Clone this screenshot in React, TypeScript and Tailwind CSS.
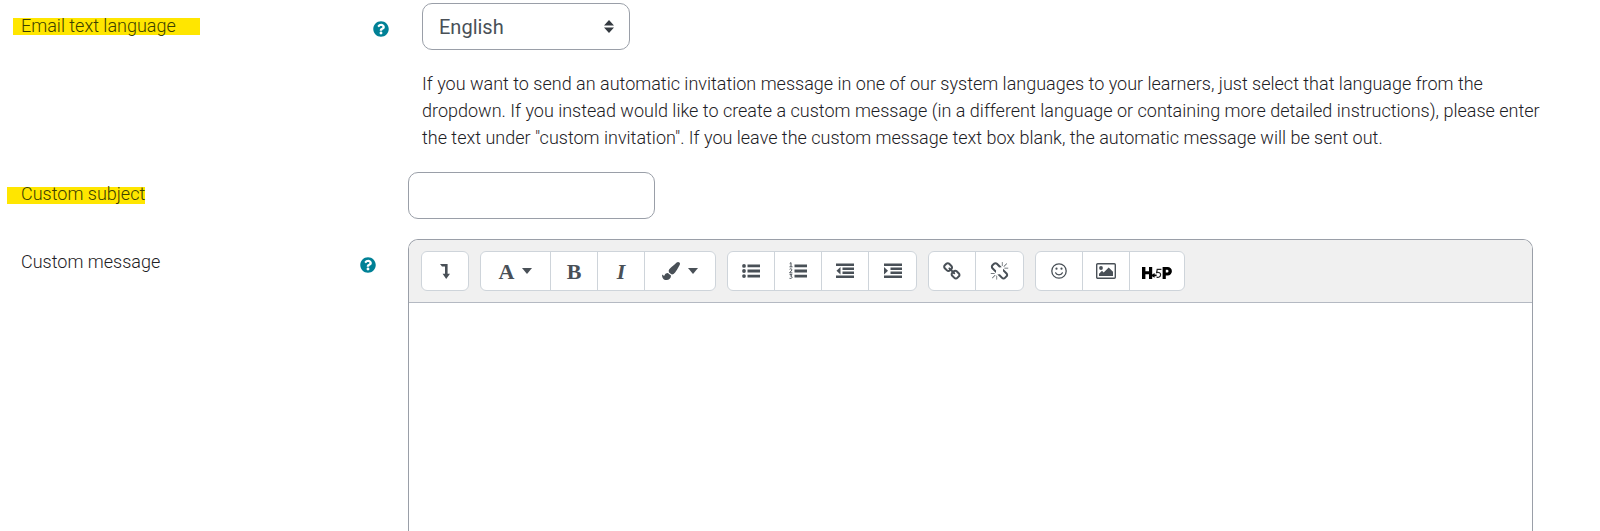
import type { ReactNode } from 'react';
import { FaPaintBrush, FaQuestionCircle } from 'react-icons/fa';

const chainPath =
  'M1456 1216q0-40-28-68l-208-208q-28-28-68-28-42 0-72 32 3 3 19 18.5t21.5 21.5 15 19 13 25.5 3.5 27.5q0 40-28 68t-68 28q-15 0-27.5-3.5t-25.5-13-19-15-21.5-21.5-18.5-19q-33 31-33 73 0 40 28 68l206 207q27 27 68 27 40 0 68-26l147-146q28-28 28-67zm-703-705q0-40-28-68l-206-207q-28-28-68-28-39 0-68 27l-147 146q-28 28-28 67 0 40 28 68l208 208q27 27 68 27 42 0 72-31-3-3-19-18.5t-21.5-21.5-15-19-13-25.5-3.5-27.5q0-40 28-68t68-28q15 0 27.5 3.5t25.5 13 19 15 21.5 21.5 18.5 19q33-31 33-73zm895 705q0 120-85 203l-147 146q-83 83-203 83-121 0-204-85l-206-207q-83-83-83-203 0-123 88-209l-88-88q-86 88-208 88-120 0-204-84l-208-208q-84-84-84-204t85-203l147-146q83-83 203-83 121 0 204 85l206 207q83 83 83 203 0 123-88 209l88 88q86-88 208-88 120 0 204 84l208 208q84 84 84 204z';

const brokenChainPath =
  'M503 1271l-256 256q-10 9-23 9-12 0-23-9-9-10-9-23t9-23l256-256q10-9 23-9t23 9q9 10 9 23t-9 23zm169 41v320q0 14-9 23t-23 9-23-9-9-23v-320q0-14 9-23t23-9 23 9 9 23zm-224-224q0 14-9 23t-23 9h-320q-14 0-23-9t-9-23 9-23 23-9h320q14 0 23 9t9 23zm1264 128q0 120-85 203l-147 146q-83 83-203 83-121 0-204-85l-334-335q-21-21-42-56l239-18 273 274q28 28 68 28.5t68-27.5l147-146q28-28 28-67 0-40-28-68l-274-275 18-239q35 21 56 42l336 336q84 86 84 204zm-617-724l-239 18-273-274q-28-28-68-28-39 0-68 27l-147 146q-28 28-28 67 0 40 28 68l274 274-18 240q-35-21-56-42l-336-336q-84-86-84-204 0-120 85-203l147-146q83-83 203-83 121 0 204 85l334 335q21 21 42 56zm633 84q0 14-9 23t-23 9h-320q-14 0-23-9t-9-23 9-23 23-9h320q14 0 23 9t9 23zm-544-544v320q0 14-9 23t-23 9-23-9-9-23v-320q0-14 9-23t23-9 23 9 9 23zm407 151l-256 256q-11 9-23 9t-23-9q-9-10-9-23t9-23l256-256q10-9 23-9t23 9q9 10 9 23t-9 23z';

function Help({ topic }: { topic: string }) {
  return (
    <button type="button" aria-label={`Help with ${topic}`} className="text-[#008196]">
      <FaQuestionCircle className="size-4" />
    </button>
  );
}

function Group({ children }: { children: ReactNode }) {
  return (
    <div className="flex items-center divide-x divide-[#ced4da] overflow-hidden rounded-md border border-[#ced4da] bg-white">
      {children}
    </div>
  );
}

const toolWidths = {
  single: 'w-[46px]',
  normal: 'w-[47px]',
  menu: 'w-[70px]',
};

function Tool({
  label,
  size = 'normal',
  children,
}: {
  label: string;
  size?: keyof typeof toolWidths;
  children: ReactNode;
}) {
  return (
    <button
      type="button"
      aria-label={label}
      className={`flex h-[38px] items-center justify-center gap-2 text-[#495057] ${toolWidths[size]}`}
    >
      {children}
    </button>
  );
}

function Caret() {
  return (
    <svg viewBox="0 0 10 6" className="h-[6px] w-[10px]" fill="currentColor">
      <path d="M0 0h10L5 6z" />
    </svg>
  );
}

function Lines({ marker, d }: { marker: ReactNode; d: string }) {
  return (
    <svg viewBox="0 0 18 18" className="size-[18px]" fill="currentColor">
      {marker}
      <path d={d} />
    </svg>
  );
}

const itemLines = 'M5.5 2.5H18v2.8H5.5zM5.5 7.6H18v2.8H5.5zM5.5 12.7H18v2.8H5.5z';
const indentLines = 'M0 1.5h18v2.4H0zM6.5 5.5H18v2.4H6.5zM6.5 9.5H18v2.4H6.5zM0 13.5h18v2.4H0z';

export default function App() {
  return (
    <form className="bg-white pt-[3px] font-['Roboto','Liberation_Sans',sans-serif] text-lg leading-[27px] font-light text-[#1d2125]">
      <div className="grid grid-cols-[422px_1fr]">
        <div className="flex items-start justify-between pt-[15px] pr-[33px] pl-[13px]">
          <label htmlFor="language" className="h-[17px] bg-[#ffe600] pr-6 pl-2 leading-[15px] text-[#3c4000]">
            Email text language
          </label>
          <div className="flex pt-[3px]">
            <Help topic="email text language" />
          </div>
        </div>
        <div className="pr-7">
          <div className="grid w-[208px] items-center">
            <select
              id="language"
              className="col-start-1 row-start-1 h-[47px] appearance-none rounded-[10px] border border-[#9a9fa8] bg-white pr-9 pl-4 text-xl font-normal text-[#495057]"
            >
              <option>English</option>
            </select>
            <svg
              viewBox="0 0 10 13"
              className="pointer-events-none col-start-1 row-start-1 mr-4 h-[13px] w-[10px] justify-self-end"
              fill="#343a40"
            >
              <path d="M0 5.5h10L5 0zM0 7.5h10L5 13z" />
            </svg>
          </div>
          <p className="mt-5">
            If you want to send an automatic invitation message in one of our system languages to your learners, just
            select that language from the
            <br />
            dropdown. If you instead would like to create a custom message (in a different language or containing more
            detailed instructions), please enter
            <br />
            the text under &quot;custom invitation&quot;. If you leave the custom message text box blank, the automatic
            message will be sent out.
          </p>
        </div>
      </div>

      <div className="mt-[21px] grid grid-cols-[408px_1fr]">
        <div className="flex items-start pt-[15px] pl-[7px]">
          <label htmlFor="subject" className="h-[17px] bg-[#ffe600] pl-[14px] leading-[13px] text-[#3c4000]">
            Custom subject
          </label>
        </div>
        <div>
          <input
            id="subject"
            type="text"
            className="block h-[47px] w-[247px] rounded-[10px] border border-[#9a9fa8] px-4 text-xl font-normal"
          />
        </div>
      </div>

      <div className="mt-5 grid grid-cols-[408px_1fr]">
        <div className="flex items-start justify-between pt-[9px] pr-8 pl-[21px]">
          <label htmlFor="message">Custom message</label>
          <div className="flex pt-[9px]">
            <Help topic="custom message" />
          </div>
        </div>
        <div className="mr-[67px] overflow-hidden rounded-t-[10px] border border-b-0 border-[#9a9fa8]">
          <div className="flex flex-wrap items-start gap-[11px] border-b border-[#b4b9c2] bg-[#f0f0f0] px-3 pt-[11px] pb-[11px]">
            <Group>
              <Tool label="Show more buttons" size="single">
                <svg viewBox="0 0 10 15" className="h-[15px] w-[10px]" fill="currentColor">
                  <path d="M0 0h7.6v9.8H10L6.2 15 2.6 9.8H5V2.6H2z" />
                </svg>
              </Tool>
            </Group>
            <Group>
              <Tool label="Paragraph styles" size="menu">
                <span className="font-['Liberation_Serif',serif] text-[22px] font-bold">A</span>
                <Caret />
              </Tool>
              <Tool label="Bold">
                <span className="font-['Liberation_Serif',serif] text-[22px] font-bold">B</span>
              </Tool>
              <Tool label="Italic">
                <span className="font-['Liberation_Serif',serif] text-[22px] font-bold italic">I</span>
              </Tool>
              <Tool label="Font colour" size="menu">
                <FaPaintBrush className="size-[18px]" />
                <Caret />
              </Tool>
            </Group>
            <Group>
              <Tool label="Unordered list">
                <Lines
                  d={itemLines}
                  marker={
                    <>
                      <circle cx="2" cy="3.9" r="1.9" />
                      <circle cx="2" cy="9" r="1.9" />
                      <circle cx="2" cy="14.1" r="1.9" />
                    </>
                  }
                />
              </Tool>
              <Tool label="Ordered list">
                <Lines
                  d={itemLines}
                  marker={
                    <path
                      d="M.7 1.6 2 .6v4M.5 4.8h3M.6 7.3c1-1 2.6-.4 2.2.8L.6 10.9h2.8M.6 12.6h2.3l-1.2 1.6c2.2 0 1.7 2.9-1.2 2.1"
                      fill="none"
                      stroke="currentColor"
                    />
                  }
                />
              </Tool>
              <Tool label="Outdent">
                <Lines d={indentLines} marker={<path d="M4.5 5v7.6L.5 8.8z" />} />
              </Tool>
              <Tool label="Indent">
                <Lines d={indentLines} marker={<path d="M0 5v7.6l4-3.8z" />} />
              </Tool>
            </Group>
            <Group>
              <Tool label="Link">
                <svg viewBox="0 0 1792 1792" className="size-[19px]" fill="currentColor">
                  <path d={chainPath} />
                </svg>
              </Tool>
              <Tool label="Unlink">
                <svg viewBox="0 0 1792 1792" className="size-[19px]" fill="currentColor">
                  <path d={brokenChainPath} />
                </svg>
              </Tool>
            </Group>
            <Group>
              <Tool label="Emoji picker">
                <svg viewBox="0 0 16 16" className="size-4" fill="none" stroke="currentColor" strokeWidth="1.3">
                  <circle cx="8" cy="8" r="7.2" />
                  <path d="M4.6 9.8c1 2.7 5.8 2.7 6.8 0" strokeLinecap="round" />
                  <circle cx="5.5" cy="5.7" r="1.1" fill="currentColor" stroke="none" />
                  <circle cx="10.5" cy="5.7" r="1.1" fill="currentColor" stroke="none" />
                </svg>
              </Tool>
              <Tool label="Insert image">
                <svg viewBox="0 0 20 16" className="h-4 w-5" fill="currentColor">
                  <rect x=".7" y=".7" width="18.6" height="14.6" rx="1" fill="none" stroke="currentColor" strokeWidth="1.4" />
                  <circle cx="5" cy="5" r="1.9" />
                  <path d="M3 13v-2.2l3-3 1.7 1.7 5-5L17 8.8V13z" />
                </svg>
              </Tool>
              <button type="button" aria-label="Insert H5P" className="flex h-[38px] w-[54px] items-center justify-center">
                <svg viewBox="0 0 30 14" className="mt-[3px] h-[14px] w-[30px]">
                  <path d="M0 1h3.4v4.2h3.6V1h3.2v12H7V8.3H3.4V13H0z" />
                  <path d="M8.6 9.4 12.6 7v1.4h2v1.8h-2v1.6z" />
                  <path d="M19.4 3.4h-4.2l-.6 3.2c2.4-.6 4 .3 4 2.2 0 2.1-2.3 3.1-4 2.1" fill="none" stroke="#222" strokeWidth="1.2" />
                  <path d="M20.6 1h5.1a4.2 4.2 0 0 1 0 8.4h-1.9V13h-3.2zM23.8 3.8v2.8h1.3a1.4 1.4 0 0 0 0-2.8z" fillRule="evenodd" />
                </svg>
              </button>
            </Group>
          </div>
          <textarea id="message" className="block h-[240px] w-full resize-none bg-white p-3 font-normal outline-none" />
        </div>
      </div>
    </form>
  );
}
